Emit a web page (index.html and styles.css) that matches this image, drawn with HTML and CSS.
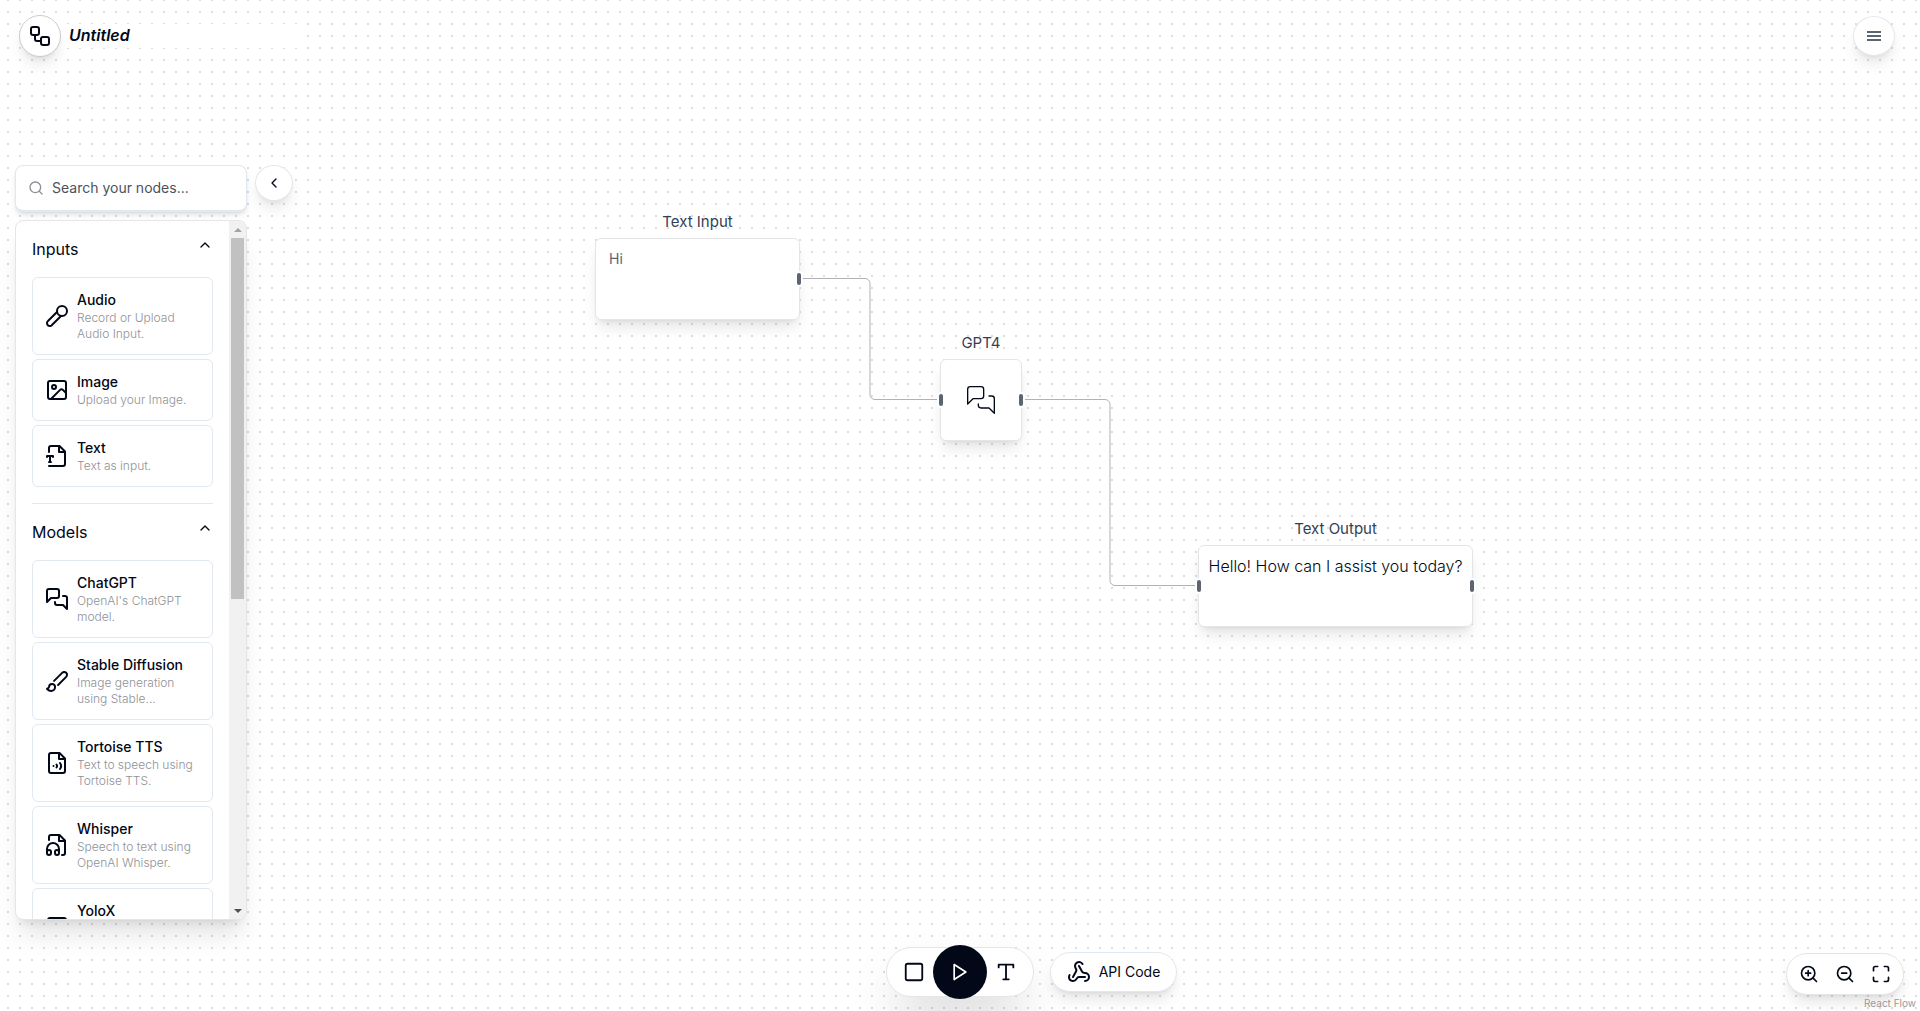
FILE: index.html
```html
<!DOCTYPE html>
<html lang="en">
<head>
<meta charset="utf-8">
<title>Untitled</title>
<meta name="viewport" content="width=device-width, initial-scale=1">
<link rel="stylesheet" href="styles.css">
</head>
<body>
<svg class="sprite" aria-hidden="true">
  <symbol id="workflow" viewBox="0 0 24 24"><rect x="3" y="3" width="8" height="8" rx="2"/><path d="M7 11v4a2 2 0 0 0 2 2h4"/><rect x="13" y="13" width="8" height="8" rx="2"/></symbol>
  <symbol id="menu" viewBox="0 0 16 16"><path d="M1 4h14M1 8h14M1 12h14"/></symbol>
  <symbol id="search" viewBox="0 0 24 24"><circle cx="11" cy="11" r="8"/><path d="m21 21-4.3-4.3"/></symbol>
  <symbol id="left" viewBox="0 0 24 24"><path d="m15 18-6-6 6-6"/></symbol>
  <symbol id="up" viewBox="0 0 24 24"><path d="m18 15-6-6-6 6"/></symbol>
  <symbol id="mic" viewBox="0 0 24 24"><path d="m12 8-9.040 9.060a2.820 2.820 0 1 0 3.980 3.980L16 12"/><circle cx="17" cy="7" r="5"/></symbol>
  <symbol id="image" viewBox="0 0 24 24"><rect x="3" y="3" width="18" height="18" rx="2"/><circle cx="9" cy="9" r="2"/><path d="m21 15-3.086-3.086a2 2 0 0 0-2.828 0L6 21"/></symbol>
  <symbol id="file-type" viewBox="0 0 24 24"><path d="M4 22h14a2 2 0 0 0 2-2V7.500L14.500 2H6a2 2 0 0 0-2 2v4"/><path d="M14 2v6h6M2 13v-1h6v1M4 18h2M5 12v6"/></symbol>
  <symbol id="chat" viewBox="0 0 24 24"><path d="M14 9a2 2 0 0 1-2 2H6l-4 4V4c0-1.100.9-2 2-2h8a2 2 0 0 1 2 2v5Z"/><path d="M18 9h2a2 2 0 0 1 2 2v11l-4-4h-6a2 2 0 0 1-2-2v-1"/></symbol>
  <symbol id="brush" viewBox="0 0 24 24"><path d="m9.060 11.900 8.070-8.060a2.850 2.850 0 1 1 4.030 4.030l-8.060 8.080"/><path d="M7.070 14.940c-1.660 0-3 1.350-3 3.020 0 1.330-2.500 1.520-2 2.020 1.080 1.100 2.490 2.020 4 2.020 2.200 0 4-1.800 4-4.040a3.010 3.010 0 0 0-3-3.020z"/></symbol>
  <symbol id="file-volume" viewBox="0 0 24 24"><path d="M14.500 2H6a2 2 0 0 0-2 2v16a2 2 0 0 0 2 2h12a2 2 0 0 0 2-2V7.500L14.500 2z"/><path d="M14 2v6h6M8.500 15h.010M11.500 13.500a2.500 2.500 0 0 1 0 3M15 12a5 5 0 0 1 0 6"/></symbol>
  <symbol id="file-audio" viewBox="0 0 24 24"><path d="M4 7V4a2 2 0 0 1 2-2h8.500L20 7.500V20a2 2 0 0 1-2 2h-1"/><path d="M14 2v6h6"/><path d="M10 20v-1a2 2 0 1 1 4 0v1a2 2 0 1 1-4 0Z"/><path d="M6 20v-1a2 2 0 1 0-4 0v1a2 2 0 1 0 4 0Z"/><path d="M2 19v-3a6 6 0 0 1 12 0v3"/></symbol>
  <symbol id="square" viewBox="0 0 24 24"><rect x="3" y="3" width="18" height="18" rx="2"/></symbol>
  <symbol id="play" viewBox="0 0 24 24"><path d="m5 3 14 9-14 9V3z"/></symbol>
  <symbol id="type" viewBox="0 0 24 24"><path d="M4 7V4h16v3M9 20h6M12 4v16"/></symbol>
  <symbol id="webhook" viewBox="0 0 24 24"><path d="M18 16.980h-5.990c-1.100 0-1.950.94-2.480 1.900A4 4 0 0 1 2 17c.010-.7.200-1.400.57-2"/><path d="m6 17 3.130-5.780c.53-.97.100-2.180-.5-3.100a4 4 0 1 1 6.890-4.060"/><path d="m12 6 3.130 5.730C15.660 12.700 16.900 13 18 13a4 4 0 0 1 0 8"/></symbol>
  <symbol id="zoom-in" viewBox="0 0 24 24"><circle cx="11" cy="11" r="8"/><path d="m21 21-4.350-4.350M11 8v6M8 11h6"/></symbol>
  <symbol id="zoom-out" viewBox="0 0 24 24"><circle cx="11" cy="11" r="8"/><path d="m21 21-4.350-4.350M8 11h6"/></symbol>
  <symbol id="fit" viewBox="0 0 24 24"><path d="M8 3H5a2 2 0 0 0-2 2v3M21 8V5a2 2 0 0 0-2-2h-3M3 16v3a2 2 0 0 0 2 2h3M16 21h3a2 2 0 0 0 2-2v-3"/></symbol>
</svg>

<div class="app">
  <main class="canvas" aria-label="Flow">
    <svg class="edges" aria-hidden="true">
      <path d="M800 278.500H865a5 5 0 0 1 5 5V394.500a5 5 0 0 0 5 5H940"/>
      <path d="M1022 399.500H1105a5 5 0 0 1 5 5V580.500a5 5 0 0 0 5 5H1198"/>
    </svg>
    <section class="node node-input">
      <h2 class="node-title">Text Input</h2>
      <div class="node-card">
        <textarea class="node-text" aria-label="Text Input">Hi</textarea>
        <span class="handle handle-out"></span>
      </div>
    </section>
    <section class="node node-model">
      <h2 class="node-title">GPT4</h2>
      <div class="node-card">
        <svg class="icon node-icon"><use href="#chat"/></svg>
        <span class="handle handle-in"></span><span class="handle handle-out"></span>
      </div>
    </section>
    <section class="node node-output">
      <h2 class="node-title">Text Output</h2>
      <div class="node-card">
        <p class="node-reply">Hello! How can I assist you today?</p>
        <span class="handle handle-in"></span><span class="handle handle-out"></span>
      </div>
    </section>
  </main>

  <header class="topbar">
    <button class="round logo" aria-label="Home"><svg class="icon"><use href="#workflow"/></svg></button>
    <input class="title" aria-label="Flow name" value="Untitled">
    <button class="round menu" aria-label="Menu"><svg class="icon"><use href="#menu"/></svg></button>
  </header>

  <aside class="sidebar">
    <div class="palette">
      <label class="search">
        <svg class="icon"><use href="#search"/></svg>
        <input class="search-input" type="text" placeholder="Search your nodes..." aria-label="Search your nodes">
      </label>
      <div class="panel">
        <div class="panel-list">
          <section class="group">
            <button class="group-head">Inputs<svg class="icon"><use href="#up"/></svg></button>
            <ul class="items">
              <li class="item"><svg class="icon"><use href="#mic"/></svg><div><h3 class="item-name">Audio</h3><p class="item-info">Record or Upload Audio Input.</p></div></li>
              <li class="item"><svg class="icon"><use href="#image"/></svg><div><h3 class="item-name">Image</h3><p class="item-info">Upload your Image.</p></div></li>
              <li class="item"><svg class="icon"><use href="#file-type"/></svg><div><h3 class="item-name">Text</h3><p class="item-info">Text as input.</p></div></li>
            </ul>
          </section>
          <section class="group">
            <button class="group-head">Models<svg class="icon"><use href="#up"/></svg></button>
            <ul class="items">
              <li class="item"><svg class="icon"><use href="#chat"/></svg><div><h3 class="item-name">ChatGPT</h3><p class="item-info">OpenAI's ChatGPT model.</p></div></li>
              <li class="item"><svg class="icon"><use href="#brush"/></svg><div><h3 class="item-name">Stable Diffusion</h3><p class="item-info">Image generation using Stable...</p></div></li>
              <li class="item"><svg class="icon"><use href="#file-volume"/></svg><div><h3 class="item-name">Tortoise TTS</h3><p class="item-info">Text to speech using Tortoise TTS.</p></div></li>
              <li class="item"><svg class="icon"><use href="#file-audio"/></svg><div><h3 class="item-name">Whisper</h3><p class="item-info">Speech to text using OpenAI Whisper.</p></div></li>
              <li class="item"><svg class="icon"><use href="#image"/></svg><div><h3 class="item-name">YoloX</h3><p class="item-info">Object detection using YoloX.</p></div></li>
            </ul>
          </section>
        </div>
        <div class="scrollbar" aria-hidden="true"><span class="arrow arrow-up"></span><span class="track"><span class="thumb"></span></span><span class="arrow arrow-down"></span></div>
      </div>
    </div>
    <button class="round collapse" aria-label="Collapse panel"><svg class="icon"><use href="#left"/></svg></button>
  </aside>

  <footer class="bottombar">
    <div class="actions">
      <div class="pill tools">
        <button class="tool" aria-label="Stop"><svg class="icon"><use href="#square"/></svg></button>
        <button class="run" aria-label="Run"><svg class="icon"><use href="#play"/></svg></button>
        <button class="tool" aria-label="Text"><svg class="icon"><use href="#type"/></svg></button>
      </div>
      <button class="pill api"><svg class="icon"><use href="#webhook"/></svg>API Code</button>
    </div>
    <div class="view">
      <div class="pill zoom">
        <button class="tool" aria-label="Zoom in"><svg class="icon"><use href="#zoom-in"/></svg></button>
        <button class="tool" aria-label="Zoom out"><svg class="icon"><use href="#zoom-out"/></svg></button>
        <button class="tool" aria-label="Fit view"><svg class="icon"><use href="#fit"/></svg></button>
      </div>
      <a class="credit" href="#">React Flow</a>
    </div>
  </footer>
</div>
</body>
</html>
```

FILE: styles.css
```css
:root {
  --ink: #020817;
  --line: #e2e8f0;
  --soft: #e5e5e5;
  --shadow-lg: 0 10px 15px -3px rgba(0, 0, 0, .1), 0 4px 6px -4px rgba(0, 0, 0, .1);
  --shadow-md: 0 4px 6px -1px rgba(0, 0, 0, .1), 0 2px 4px -2px rgba(0, 0, 0, .1);
  --shadow-xl: 0 20px 25px -5px rgba(0, 0, 0, .1), 0 8px 10px -6px rgba(0, 0, 0, .1);
}

*, *::before, *::after { box-sizing: border-box; }

body {
  margin: 0;
  color: var(--ink);
  font-family: Inter, "Liberation Sans", sans-serif;
  font-size: 14px;
  line-height: 20px;
}

h2, h3, p, ul { margin: 0; padding: 0; font-weight: 400; }
ul { list-style: none; }
button, input, textarea { font: inherit; color: inherit; }
button { display: flex; align-items: center; justify-content: center; padding: 0; border: 0; background: #fff; cursor: pointer; }

.sprite { position: absolute; width: 0; height: 0; }

.icon {
  flex: none;
  width: 24px;
  height: 24px;
  fill: none;
  stroke: currentColor;
  stroke-width: 2;
  stroke-linecap: round;
  stroke-linejoin: round;
}

.app {
  position: relative;
  display: flex;
  flex-direction: column;
  justify-content: space-between;
  height: 100vh;
  overflow: hidden;
}

/* Canvas with its dot grid */
.canvas {
  position: absolute;
  inset: 0;
  background: #fff conic-gradient(from 270deg at 2px 2px, #ddd 90deg, transparent 0) 7px 11px / 12px 12px;
}

.edges { position: absolute; inset: 0; width: 100%; height: 100%; fill: none; stroke: #b1b1b7; }

.node { position: absolute; display: flex; flex-direction: column; gap: 6px; text-align: center; color: #334155; }
.node-input { left: 595px; top: 212px; width: 205px; }
.node-model { left: 940px; top: 333px; width: 82px; }
.node-output { left: 1198px; top: 519px; width: 275px; }
.node-title { font-size: 15px; line-height: 20px; }

.node-card {
  position: relative;
  display: flex;
  height: 82px;
  border: 1px solid var(--soft);
  border-radius: 6px;
  background: #fff;
  box-shadow: var(--shadow-lg);
}

.node-text {
  flex: 1;
  min-width: 0;
  padding: 10px 13px;
  border: 0;
  border-radius: 6px;
  outline: 0;
  background: none;
  resize: none;
  color: #5b6472;
}

.node-reply { flex: 1; padding: 8px 0; font-size: 16px; line-height: 24px; font-weight: 300; white-space: nowrap; color: var(--ink); }
.node-icon { width: 32px; height: 32px; margin: auto; stroke-width: 1; color: var(--ink); }

.handle {
  position: absolute;
  top: 32px;
  width: 8px;
  height: 16px;
  border: 2px solid #fff;
  border-radius: 4px;
  background: #5c6470;
}
.handle-in { left: -4px; }
.handle-out { right: -4px; }

/* Top bar */
.round { border: 1px solid var(--line); border-radius: 50%; box-shadow: var(--shadow-lg); }
.topbar { position: relative; display: flex; align-items: center; padding: 15px 25px 0 19px; }
.logo { width: 42px; height: 42px; border-color: #ccc; }
.title {
  width: 240px;
  height: 24px;
  margin: 0 auto 0 4px;
  padding: 0 4px 2px;
  border: 0;
  outline: 0;
  background: #fff;
  font-size: 16px;
  line-height: 22px;
  font-style: italic;
  font-weight: 600;
}
.menu { width: 42px; height: 40px; color: #5b6472; }
.menu .icon { width: 16px; height: 16px; stroke-linecap: butt; }

/* Node palette */
.sidebar { position: absolute; top: 165px; bottom: 91px; left: 15px; display: flex; gap: 8px; align-items: flex-start; }
.palette { display: flex; flex-direction: column; gap: 8px; width: 232px; height: 100%; }
.search {
  display: flex;
  flex: none;
  align-items: center;
  gap: 8px;
  height: 47px;
  padding: 0 12px;
  border: 1px solid var(--line);
  border-bottom-width: 2px;
  border-radius: 8px;
  background: #fff;
  box-shadow: var(--shadow-md);
  color: #8b8f98;
}
.search .icon { width: 16px; height: 16px; }
.search-input { flex: 1; min-width: 0; padding: 0; border: 0; outline: 0; background: none; }
.search-input::placeholder { color: #4b5260; opacity: 1; }

.panel {
  display: flex;
  flex: 1;
  min-height: 0;
  border: 1px solid var(--soft);
  border-radius: 8px;
  overflow: hidden;
  background: #fff;
  box-shadow: var(--shadow-xl);
}
.panel-list { flex: 1; min-width: 0; padding: 0 16px; overflow-y: auto; scrollbar-width: none; }

.group + .group { border-top: 1px solid var(--line); }
.group-head {
  justify-content: space-between;
  width: 100%;
  height: 56px;
  font-size: 16px;
  line-height: 24px;
}
.group-head .icon { width: 16px; height: 16px; margin: 0 0 8px; }
.items { display: grid; gap: 4px; padding-bottom: 16px; }
.item {
  display: flex;
  align-items: center;
  gap: 8px;
  padding: 12px;
  border: 1px solid var(--line);
  border-radius: 6px;
}
.item-name { font-size: 14px; line-height: 20px; font-weight: 500; }
.item-info { font-size: 12px; line-height: 16px; font-weight: 300; color: #8f9299; }

.scrollbar { display: flex; flex-direction: column; width: 17px; background: #f1f1f1; }
.arrow { display: grid; place-items: center; height: 17px; }
.arrow::before { content: ""; border: 4px solid transparent; }
.arrow-up::before { border-top: 0; border-bottom-color: #a3a3a3; }
.arrow-down::before { border-bottom: 0; border-top-color: #505050; }
.track { flex: 1; padding: 0 2px; }
.thumb { display: block; height: 361px; background: #c1c1c1; }

.collapse { width: 38px; height: 36px; }
.collapse .icon { width: 16px; height: 16px; }

/* Bottom bar */
.bottombar { position: relative; display: flex; justify-content: center; }
.pill { display: flex; align-items: center; border: 1px solid var(--soft); border-radius: 99px; background: #fff; box-shadow: var(--shadow-lg); }
.actions { display: flex; align-items: center; gap: 16px; padding: 0 0 14px 143px; }
.tools { height: 50px; padding: 0 16px; gap: 8px; box-shadow: 0 25px 50px -12px rgba(0, 0, 0, .25); }
.tool { background: none; }
.tools .icon { width: 22px; height: 22px; }
.run { width: 54px; height: 54px; border-radius: 50%; background: var(--ink); color: #fff; }
.tools .run .icon { width: 20px; height: 20px; }
.api { height: 40px; padding: 0 16px; gap: 8px; border-color: var(--line); font-weight: 400; }

.view { position: absolute; right: 0; bottom: 0; display: flex; flex-direction: column; align-items: flex-end; }
.zoom { height: 42px; margin-right: 16px; padding: 0 12px; gap: 16px; }
.zoom .icon { width: 20px; height: 20px; }
.credit { padding: 2px 4px; font-size: 10px; line-height: 12px; color: #999; text-decoration: none; }
```
